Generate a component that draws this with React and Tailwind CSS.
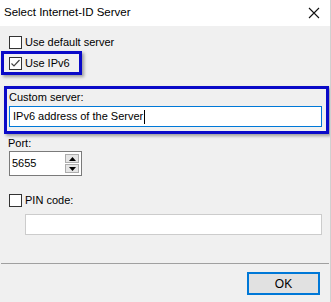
import React from "react";

function Box({ checked }) {
  return (
    <div className="w-[13px] h-[13px] border border-[#333333] bg-white flex items-center justify-center shrink-0">
      {checked && (
        <svg width="11" height="11" viewBox="0 0 11 11">
          <path d="M1.5 5.5 L4 8 L9.5 2" stroke="#444" strokeWidth="1.2" fill="none" />
        </svg>
      )}
    </div>
  );
}

export default function App() {
  return (
    <div
      className="w-[331px] h-[302px] bg-[#f0f0f0] flex flex-col text-[11px] text-black overflow-hidden border-r border-[#d0d0d0]"
      style={{ fontFamily: "'Liberation Sans', Arial, sans-serif" }}
    >
      <div className="h-[26px] bg-white flex items-center justify-between pl-[4px] pr-[10px] shrink-0">
        <span className="text-[11.5px] leading-none">Select Internet-ID Server</span>
        <svg width="12" height="12" viewBox="0 0 12 12">
          <path d="M1 1 L11 11 M11 1 L1 11" stroke="#111" strokeWidth="1.1" />
        </svg>
      </div>

      <div className="flex items-center gap-[3px] ml-[9px] mt-[10px] h-[13px]">
        <Box />
        <span className="leading-none">Use default server</span>
      </div>

      <div className="ml-[1px] mt-[2px] w-[81px] h-[24px] border-[3px] border-[#0a0ac8] pl-[5px] pt-[3px] shadow-[2px_2px_3px_rgba(0,0,0,0.35)]">
        <div className="flex items-center gap-[3px] h-[13px]">
          <Box checked />
          <span className="leading-none">Use IPv6</span>
        </div>
      </div>

      <div className="ml-[4px] mt-[11px] w-[325px] h-[48px] border-[3px] border-[#0a0ac8] pl-[2px] pr-[4px] shadow-[2px_2px_3px_rgba(0,0,0,0.35)]">
        <div className="h-[15px] leading-[15px] pt-[1px]">Custom server:</div>
        <div className="mt-[2px] h-[21px] border border-[#0078d7] bg-white flex items-center pl-[3px]">
          <span className="leading-none">IPv6 address of the Server</span>
          <span className="w-[1px] h-[14px] bg-black ml-[1px]" />
        </div>
      </div>

      <div className="ml-[8px] mt-[2px] h-[14px] leading-[14px]">Port:</div>

      <div className="ml-[9px] mt-[1px] w-[73px] h-[25px] border border-[#7a7a7a] bg-white flex items-center pl-[2px] pr-[2px] justify-between">
        <span className="leading-none">5655</span>
        <div className="flex flex-col w-[14px] h-[19px] gap-[1px]">
          <div className="flex-1 bg-[#e5e5e5] border border-[#acacac] flex items-center justify-center">
            <svg width="7" height="4" viewBox="0 0 7 4"><path d="M0 4 L3.5 0 L7 4 Z" fill="#000" /></svg>
          </div>
          <div className="flex-1 bg-[#e5e5e5] border border-[#acacac] flex items-center justify-center">
            <svg width="7" height="4" viewBox="0 0 7 4"><path d="M0 0 L3.5 4 L7 0 Z" fill="#000" /></svg>
          </div>
        </div>
      </div>

      <div className="flex items-center gap-[3px] ml-[9px] mt-[18px] h-[13px]">
        <Box />
        <span className="leading-none">PIN code:</span>
      </div>

      <div className="ml-[25px] mt-[7px] w-[297px] h-[21px] border border-[#cccccc] bg-white" />

      <div className="mt-[28px] mx-[1px] h-[1px] bg-[#a0a0a0]" />

      <div className="flex justify-end pr-[10px] mt-[8px]">
        <div className="w-[73px] h-[23px] border-2 border-[#0078d7] bg-[#e1e1e1] flex items-center justify-center">
          <span className="leading-none text-[12px]">OK</span>
        </div>
      </div>
    </div>
  );
}
